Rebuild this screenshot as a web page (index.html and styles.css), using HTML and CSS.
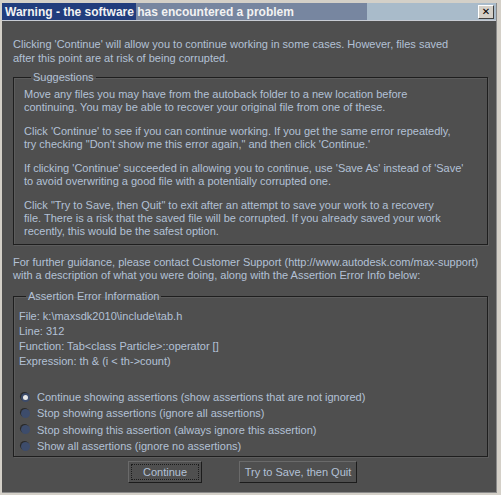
FILE: index.html
```html
<!DOCTYPE html>
<html lang="en">
<head>
    <meta charset="UTF-8">
    <title>Warning</title>
    <link rel="stylesheet" href="styles.css">
</head>
<body>
    <div class="window">
        <div class="title-bar">
            <span class="title">Warning - the software has encountered a problem</span>
            <span class="close-btn">&#x2715;</span>
        </div>
        <div class="content">
            <p class="intro">Clicking 'Continue' will allow you to continue working in some cases. However, files saved<br>after this point are at risk of being corrupted.</p>

            <fieldset class="group suggestions">
                <legend>Suggestions</legend>
                <p>Move any files you may have from the autoback folder to a new location before<br>continuing. You may be able to recover your original file from one of these.</p>
                <p>Click 'Continue' to see if you can continue working. If you get the same error repeatedly,<br>try checking "Don't show me this error again," and then click 'Continue.'</p>
                <p>If clicking 'Continue' succeeded in allowing you to continue, use 'Save As' instead of 'Save'<br>to avoid overwriting a good file with a potentially corrupted one.</p>
                <p>Click "Try to Save, then Quit" to exit after an attempt to save your work to a recovery<br>file. There is a risk that the saved file will be corrupted. If you already saved your work<br>recently, this would be the safest option.</p>
            </fieldset>

            <p class="guidance">For further guidance, please contact Customer Support (http://www.autodesk.com/max-support)<br>with a description of what you were doing, along with the Assertion Error Info below:</p>

            <fieldset class="group assertion">
                <legend>Assertion Error Information</legend>
                <div class="info">
                    <div>File: k:\maxsdk2010\include\tab.h</div>
                    <div>Line: 312</div>
                    <div>Function: Tab&lt;class Particle&gt;::operator []</div>
                    <div>Expression: th &amp; (i &lt; th-&gt;count)</div>
                </div>
                <div class="options">
                    <label class="option"><span class="radio checked"></span>Continue showing assertions (show assertions that are not ignored)</label>
                    <label class="option"><span class="radio"></span>Stop showing assertions (ignore all assertions)</label>
                    <label class="option"><span class="radio"></span>Stop showing this assertion (always ignore this assertion)</label>
                    <label class="option"><span class="radio"></span>Show all assertions (ignore no assertions)</label>
                </div>
            </fieldset>

            <div class="buttons">
                <button class="btn btn-continue"><span>Continue</span></button>
                <button class="btn btn-quit">Try to Save, then Quit</button>
            </div>
        </div>
    </div>
</body>
</html>
```

FILE: styles.css
```css
* {
    margin: 0;
    padding: 0;
    box-sizing: border-box;
    font-family: "Liberation Sans", Arial, sans-serif;
}

body {
    background-color: #d4d0c8;
    width: 501px;
    height: 495px;
    overflow: hidden;
}

.window {
    margin: 3px 0 0 2px;
    width: 495px;
    height: 490px;
    display: flex;
    flex-direction: column;
    background-color: #4f4f4f;
    border-right: 1px solid #8a8a8a;
    border-bottom: 1px solid #8a8a8a;
}

/* Title bar */
.title-bar {
    height: 18px;
    display: flex;
    align-items: center;
    justify-content: space-between;
    padding: 0 2px 0 3px;
    background: linear-gradient(to right, #213d7d 0, #213d7d 134px, #7786a0 134px, #7786a0 365px, #a9bbca 365px);
    border-bottom: 1px solid #c8ccd4;
}

.title {
    color: #f2f2f2;
    font-weight: bold;
    font-size: 12px;
    white-space: nowrap;
}

.close-btn {
    width: 16px;
    height: 14px;
    background-color: #d4d0c8;
    border: 1px solid;
    border-color: #ffffff #404040 #404040 #ffffff;
    color: #000;
    font-size: 10px;
    font-weight: bold;
    line-height: 12px;
    text-align: center;
    font-family: "DejaVu Sans", sans-serif;
}

/* Content */
.content {
    flex: 1;
    padding: 16px 8px 0 11px;
    color: #b3c1d6;
    font-size: 11px;
    white-space: nowrap;
}

.intro {
    line-height: 14px;
    margin-bottom: 6px;
}

.group {
    border: 1px solid #1e1e1e;
    box-shadow: inset 1px 1px 0 #5c5c5c, 1px 1px 0 #5c5c5c;
    width: 475px;
}

.group legend {
    margin-left: 7px;
    padding: 0 2px;
    line-height: 13px;
}

.suggestions {
    padding: 4px 10px 6px 10px;
}

.suggestions p {
    line-height: 13px;
    margin-bottom: 11px;
}

.suggestions p:last-child {
    margin-bottom: 0;
}

.guidance {
    line-height: 13px;
    margin: 11px 0 8px 0;
}

.assertion {
    padding: 6px 5px 2px 5px;
}

.info div {
    line-height: 15px;
}

.options {
    margin-top: 20px;
}

.option {
    display: flex;
    align-items: center;
    height: 16.3px;
    gap: 7px;
    padding-left: 2px;
}

.radio {
    width: 9px;
    height: 9px;
    border-radius: 50%;
    background-color: #3d4c6b;
    box-shadow: -1px -1px 0 #2a2a2a;
    position: relative;
}

.radio.checked::after {
    content: "";
    position: absolute;
    left: 2px;
    top: 2px;
    width: 5px;
    height: 5px;
    border-radius: 50%;
    background-color: #e8e8e8;
}

/* Buttons */
.buttons {
    display: flex;
    justify-content: center;
    gap: 37px;
    padding-right: 16px;
    margin-top: 4px;
}

.btn {
    height: 22px;
    background-color: #4f4f4f;
    color: #b3c1d6;
    font-size: 11px;
    font-family: "Liberation Sans", Arial, sans-serif;
    border: 1px solid;
    border-color: #6a6a6a #1c1c1c #1c1c1c #6a6a6a;
}

.btn-continue {
    width: 74px;
    padding: 2px;
}

.btn-continue span {
    display: flex;
    align-items: center;
    justify-content: center;
    height: 100%;
    border: 1px dotted #1c1c1c;
}

.btn-quit {
    width: 118px;
}
```
